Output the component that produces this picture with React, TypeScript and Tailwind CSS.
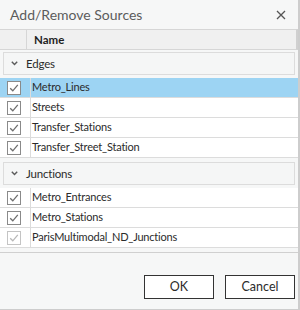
import React from 'react';

interface Row {
  name: string;
  selected?: boolean;
  disabled?: boolean;
}

interface Group {
  title: string;
  rows: Row[];
}

const groups: Group[] = [
  {
    title: 'Edges',
    rows: [
      { name: 'Metro_Lines', selected: true },
      { name: 'Streets' },
      { name: 'Transfer_Stations' },
      { name: 'Transfer_Street_Station' },
    ],
  },
  {
    title: 'Junctions',
    rows: [
      { name: 'Metro_Entrances' },
      { name: 'Metro_Stations' },
      { name: 'ParisMultimodal_ND_Junctions', disabled: true },
    ],
  },
];

const CheckBox: React.FC<{ disabled?: boolean }> = ({ disabled }) => (
  <div
    className={`w-[14px] h-[14px] border bg-white flex items-center justify-center ${
      disabled ? 'border-[#c4c4c4]' : 'border-[#8a8a8a]'
    }`}
  >
    <svg width="12" height="12" viewBox="0 0 12 12">
      <path
        d="M2.2 6.2 L4.8 8.8 L9.8 2.8"
        fill="none"
        stroke={disabled ? '#b8b8b8' : '#6e6e6e'}
        strokeWidth="1.3"
      />
    </svg>
  </div>
);

const GroupHeader: React.FC<{ title: string }> = ({ title }) => (
  <div className="mx-[3px] h-[23px] border border-[#dcdcdc] bg-[#f5f6f6] flex items-center pl-[7px]">
    <svg width="7" height="5" viewBox="0 0 7 5" className="mr-[8px]">
      <path d="M0.8 0.8 L3.5 3.6 L6.2 0.8" fill="none" stroke="#5a5a5a" strokeWidth="1.4" />
    </svg>
    <span className="text-[11.5px] tracking-[-0.2px] text-[#2b2b2b]">{title}</span>
  </div>
);

const ListRow: React.FC<{ row: Row }> = ({ row }) => (
  <div
    className={`h-[20px] flex border-b border-[#dcdcdc] ${
      row.selected ? 'bg-[#9dd4f3]' : 'bg-white'
    }`}
  >
    <div className="w-[31px] flex items-center pl-[7px] border-r border-[#dcdcdc]">
      <CheckBox disabled={row.disabled} />
    </div>
    <div className="flex-1 flex items-center pl-[1px] text-[11px] tracking-[-0.2px] text-[#2b2b2b] whitespace-nowrap">
      {row.name}
    </div>
  </div>
);

export default function App() {
  return (
    <div
      className="w-[300px] h-[310px] bg-[#f6f7f7] border-r-2 border-b border-[#cdcdcd] flex flex-col"
      style={{ fontFamily: 'Lato, "Open Sans", sans-serif' }}
    >
      <div className="h-[29px] flex items-center justify-between pl-[10px] pr-[12px]">
        <span className="text-[14px] text-[#5c5c5c]">Add/Remove Sources</span>
        <svg width="10" height="10" viewBox="0 0 10 10">
          <path d="M1 1 L9 9 M9 1 L1 9" stroke="#555" strokeWidth="1.3" />
        </svg>
      </div>

      <div className="h-[224px] flex flex-col border-b border-[#d0d0d0] overflow-hidden">
        <div className="h-[21px] flex bg-[#f0f0f0] border-y border-[#d6d6d6] border-r-2 border-r-[#d0d0d0]">
          <div className="w-[27px] border-r border-[#d6d6d6]" />
          <div className="flex items-center pl-[7px] text-[11.5px] font-bold text-[#1e1e1e]">Name</div>
        </div>
        <div className="flex flex-col pt-[2px] bg-[#f6f7f7]">
          {groups.map((g, gi) => (
            <div key={g.title} className={`flex flex-col ${gi > 0 ? 'mt-[4px]' : ''}`}>
              <GroupHeader title={g.title} />
              <div className="mt-[3px] flex flex-col">
                {g.rows.map(r => (
                  <ListRow key={r.name} row={r} />
                ))}
              </div>
            </div>
          ))}
        </div>
      </div>

      <div className="flex-1 flex items-end justify-end gap-[11px] pr-[3px] pb-[10px]">
        <button className="w-[70px] h-[24px] border border-[#333] bg-white text-[12.5px] text-[#2b2b2b]">
          OK
        </button>
        <button className="w-[70px] h-[24px] border border-[#333] bg-white text-[12.5px] text-[#2b2b2b]">
          Cancel
        </button>
      </div>
    </div>
  );
}
